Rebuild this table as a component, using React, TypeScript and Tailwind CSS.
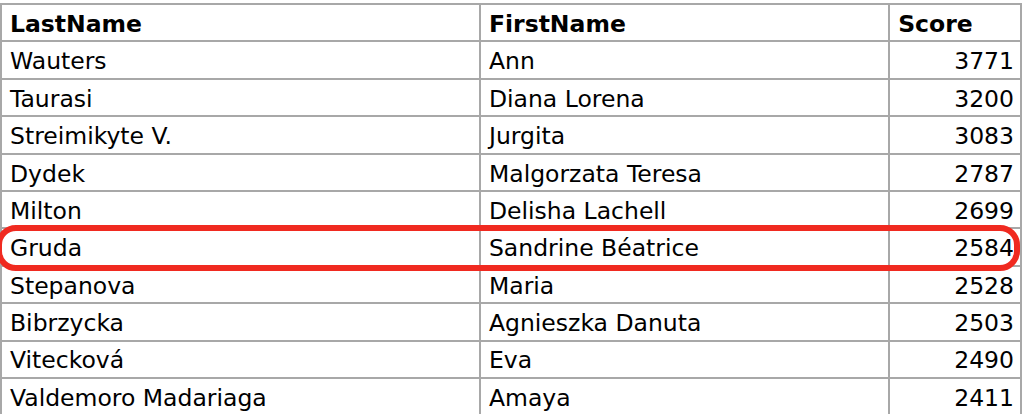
import React from "react";

const rows: [string, string, string][] = [
  ["Wauters", "Ann", "3771"],
  ["Taurasi", "Diana Lorena", "3200"],
  ["Streimikyte V.", "Jurgita", "3083"],
  ["Dydek", "Malgorzata Teresa", "2787"],
  ["Milton", "Delisha Lachell", "2699"],
  ["Gruda", "Sandrine Béatrice", "2584"],
  ["Stepanova", "Maria", "2528"],
  ["Bibrzycka", "Agnieszka Danuta", "2503"],
  ["Vitecková", "Eva", "2490"],
  ["Valdemoro Madariaga", "Amaya", "2411"],
];

export default function App() {
  return (
    <div
      className="relative w-[1022px] h-[414px] overflow-hidden bg-white text-black pt-[3px]"
      style={{ fontFamily: '"DejaVu Sans", Verdana, sans-serif' }}
    >
      <table className="w-[1022px] border-collapse text-[23.5px] leading-none">
        <colgroup>
          <col className="w-[480px]" />
          <col className="w-[410px]" />
          <col className="w-[132px]" />
        </colgroup>
        <thead>
          <tr className="h-[37.4px]">
            <th className="border-2 border-[#a8a8a8] text-left font-bold pl-2 pt-[4px]">LastName</th>
            <th className="border-2 border-[#a8a8a8] text-left font-bold pl-2 pt-[4px]">FirstName</th>
            <th className="border-2 border-[#a8a8a8] text-left font-bold pl-2 pt-[4px]">Score</th>
          </tr>
        </thead>
        <tbody>
          {rows.map((r) => (
            <tr key={r[0]} className="h-[37.4px]">
              <td className="border-2 border-[#a8a8a8] pl-2 pt-[4px]">{r[0]}</td>
              <td className="border-2 border-[#a8a8a8] pl-2 pt-[4px]">{r[1]}</td>
              <td className="border-2 border-[#a8a8a8] text-right pr-[6px] pt-[4px]">{r[2]}</td>
            </tr>
          ))}
        </tbody>
      </table>
      <div className="absolute left-[-4px] top-[225px] w-[1024px] h-[46px] rounded-[20px] border-[6px] border-[#f02a20] pointer-events-none" />
    </div>
  );
}
